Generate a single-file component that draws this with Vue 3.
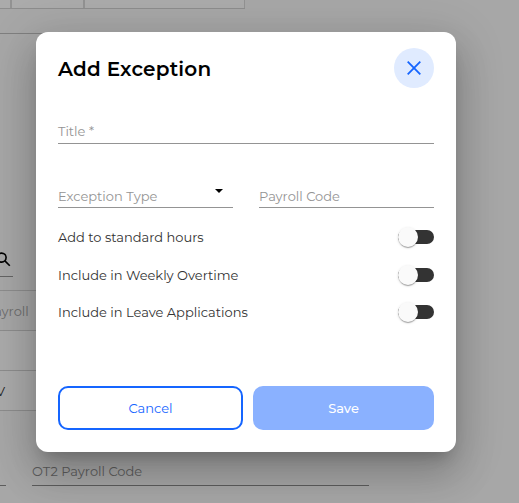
<template>
  <div class="screen">
    <div class="page">
      <div class="tabs">
        <span class="tab first"></span>
        <span class="tab second"></span>
        <span class="tab third"></span>
      </div>
      <div class="divider"></div>
      <div class="search">
        <svg width="18" height="18" viewBox="0 0 18 18">
          <circle cx="6.6" cy="6.6" r="4.5" />
          <path d="M9.9 9.9L14.8 14.8" />
        </svg>
      </div>
      <div class="table">
        <div class="cell head">Payroll</div>
        <div class="cell"></div>
        <div class="cell dark">V</div>
      </div>
      <div class="page-fields">
        <div class="page-field stub"></div>
        <div class="page-field">OT2 Payroll Code</div>
      </div>
    </div>

    <div class="overlay">
      <div class="dialog">
        <header class="dialog-header">
          <h2>Add Exception</h2>
          <button class="close" aria-label="Close">
            <svg width="14" height="14" viewBox="0 0 14 14">
              <path d="M0.7 0.7L13.3 13.3M13.3 0.7L0.7 13.3" />
            </svg>
          </button>
        </header>

        <div class="field title-field">Title *</div>

        <div class="field-row">
          <div class="field">
            <span>Exception Type</span>
            <i class="arrow"></i>
          </div>
          <div class="field">Payroll Code</div>
        </div>

        <div class="toggles">
          <div v-for="item in toggles" :key="item.label" class="toggle-row" @click="item.on = !item.on">
            <span>{{ item.label }}</span>
            <span class="toggle" :class="{ on: item.on }"><span class="thumb"></span></span>
          </div>
        </div>

        <footer class="actions">
          <button class="btn cancel">Cancel</button>
          <button class="btn save">Save</button>
        </footer>
      </div>
    </div>
  </div>
</template>

<script setup>
import { reactive } from 'vue'

const toggles = reactive([
  { label: 'Add to standard hours', on: false },
  { label: 'Include in Weekly Overtime', on: false },
  { label: 'Include in Leave Applications', on: false }
])
</script>

<style>
body {
  margin: 0;
  overflow: hidden;
}
</style>

<style scoped>
* {
  box-sizing: border-box;
}

.screen {
  display: grid;
  width: 519px;
  height: 503px;
  overflow: hidden;
  font-family: Montserrat, Inter, sans-serif;
  font-size: 13px;
}

.page,
.overlay {
  grid-area: 1 / 1;
  min-width: 0;
  min-height: 0;
}

.page {
  background: #f7f7f7;
  overflow: hidden;
}

.tabs {
  display: flex;
  width: 245px;
  height: 9px;
  background: #fdfdfd;
  border-bottom: 1px solid #d0d0d0;
}

.tab {
  border-right: 2px solid #d8d8d8;
}

.first {
  width: 12px;
}

.second {
  width: 73px;
}

.third {
  flex: 1;
  border-right-width: 1px;
}

.divider {
  margin-top: 24px;
  width: 400px;
  height: 1px;
  background: #bcbcbc;
}

.search {
  margin-top: 217px;
  width: 13px;
  height: 26px;
  border-bottom: 1px solid #949494;
}

.search svg {
  display: block;
  margin-left: -5px;
  fill: none;
  stroke: #000;
  stroke-width: 1.6;
}

.table {
  margin-top: 13px;
  width: 300px;
  border-top: 1px solid #d0d0d0;
}

.cell {
  height: 40px;
  line-height: 40px;
  background: #fdfdfd;
  border-bottom: 1px solid #d0d0d0;
}

.head {
  color: #a2a2a2;
  background: #f7f7f7;
  text-indent: -15px;
}

.dark {
  color: #333;
  text-indent: -4px;
}

.page-fields {
  display: flex;
  gap: 26px;
  margin-top: 49px;
}

.page-field {
  width: 337px;
  height: 26px;
  color: #8a8a8a;
  line-height: 22px;
  border-bottom: 1px solid #8a8a8a;
}

.stub {
  width: 6px;
}

.overlay {
  display: flex;
  align-items: flex-start;
  padding: 32px 0 0 36px;
  background: rgba(0, 0, 0, 0.32);
}

.dialog {
  display: flex;
  flex-direction: column;
  width: 420px;
  height: 420px;
  padding: 16px 22px 22px;
  background: #fff;
  border-radius: 12px;
  box-shadow: 0 11px 15px -7px rgba(0, 0, 0, 0.2), 0 24px 38px 3px rgba(0, 0, 0, 0.14),
    0 9px 46px 8px rgba(0, 0, 0, 0.12);
}

.dialog-header {
  display: flex;
  align-items: center;
  justify-content: space-between;
  height: 40px;
}

h2 {
  margin: 2px 0 0;
  color: #000;
  font-size: 20px;
  font-weight: 600;
  line-height: 28px;
  letter-spacing: 0.2px;
}

.close {
  display: flex;
  align-items: center;
  justify-content: center;
  width: 40px;
  height: 40px;
  padding: 0;
  background: #e0ebff;
  border: none;
  border-radius: 50%;
  cursor: pointer;
}

.close svg {
  fill: none;
  stroke: #1565ff;
  stroke-width: 1.8;
}

.field {
  display: flex;
  flex: 1;
  justify-content: space-between;
  height: 26px;
  color: #949494;
  line-height: 26px;
  border-bottom: 1px solid #949494;
}

.title-field {
  flex: none;
  margin-top: 30px;
}

.field-row {
  display: flex;
  gap: 26px;
  margin-top: 38px;
}

.field-row .field {
  line-height: 28px;
}

.arrow {
  margin: 7px 10px 0 0;
  width: 0;
  height: 0;
  border: 4px solid transparent;
  border-top-color: #000;
  border-bottom: none;
}

.toggles {
  display: flex;
  flex-direction: column;
  gap: 17.5px;
  margin-top: 19px;
}

.toggle-row {
  display: flex;
  align-items: center;
  justify-content: space-between;
  height: 20px;
  color: #333;
  cursor: pointer;
}

.toggle {
  display: flex;
  align-items: center;
  width: 36px;
  height: 14px;
  background: #333;
  border-radius: 7px;
}

.thumb {
  width: 20px;
  height: 20px;
  background: #fafafa;
  border-radius: 50%;
  box-shadow: 0 2px 1px -1px rgba(0, 0, 0, 0.2), 0 1px 1px 0 rgba(0, 0, 0, 0.14),
    0 1px 3px 0 rgba(0, 0, 0, 0.12);
}

.on .thumb {
  margin-left: 16px;
}

.actions {
  display: flex;
  gap: 10px;
  margin-top: auto;
}

.btn {
  height: 44px;
  padding: 0;
  font-family: inherit;
  font-size: 13px;
  border-radius: 10px;
  cursor: pointer;
}

.cancel {
  width: 185px;
  color: #1565ff;
  background: #fff;
  border: 2px solid #1565ff;
}

.save {
  width: 181px;
  color: #fff;
  font-weight: 500;
  background: #8ab1ff;
  border: none;
}
</style>
